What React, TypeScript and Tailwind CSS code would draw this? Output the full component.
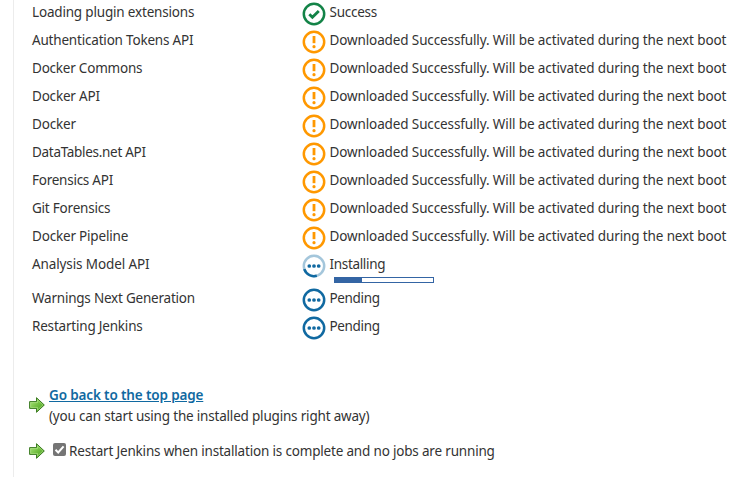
import React from "react";

type Status = "success" | "warning" | "running" | "pending";

type Job = { name: string; status: Status; message: string; track: string; messageTrack: string };

const DOWNLOADED = "Downloaded Successfully. Will be activated during the next boot";
const DT = "tracking-[-0.12px]";

const jobs: Job[] = [
  { name: "Loading plugin extensions", status: "success", message: "Success", track: "tracking-[-0.18px]", messageTrack: "tracking-[-0.25px]" },
  { name: "Authentication Tokens API", status: "warning", message: DOWNLOADED, track: "tracking-[-0.19px]", messageTrack: DT },
  { name: "Docker Commons", status: "warning", message: DOWNLOADED, track: "tracking-[-0.22px]", messageTrack: DT },
  { name: "Docker API", status: "warning", message: DOWNLOADED, track: "tracking-[-0.2px]", messageTrack: DT },
  { name: "Docker", status: "warning", message: DOWNLOADED, track: "tracking-[-0.15px]", messageTrack: DT },
  { name: "DataTables.net API", status: "warning", message: DOWNLOADED, track: "tracking-[-0.3px]", messageTrack: DT },
  { name: "Forensics API", status: "warning", message: DOWNLOADED, track: "tracking-[-0.25px]", messageTrack: DT },
  { name: "Git Forensics", status: "warning", message: DOWNLOADED, track: "tracking-[-0.22px]", messageTrack: DT },
  { name: "Docker Pipeline", status: "warning", message: DOWNLOADED, track: "tracking-[-0.19px]", messageTrack: DT },
  { name: "Analysis Model API", status: "running", message: "Installing", track: "tracking-[-0.11px]", messageTrack: "tracking-[-0.33px]" },
  { name: "Warnings Next Generation", status: "pending", message: "Pending", track: "tracking-[-0.22px]", messageTrack: "tracking-[-0.35px]" },
  { name: "Restarting Jenkins", status: "pending", message: "Pending", track: "tracking-[-0.2px]", messageTrack: "tracking-[-0.35px]" },
];

function StatusIcon({ status }: { status: Status }) {
  const color = status === "success" ? "#138347" : status === "warning" ? "#ff9800" : "#1069a1";
  return (
    <svg viewBox="0 0 24 24" className="h-6 w-6 shrink-0" fill="none">
      <circle cx="12" cy="12" r="10.2" stroke={color} strokeWidth="2.5" opacity={status === "running" ? 0.38 : 1} />
      {status === "success" && <path d="M7.3 12.2l3.1 3 6.4-6.2" stroke={color} strokeWidth="2.9" />}
      {status === "warning" && (
        <>
          <path d="M12 6v7.2" stroke={color} strokeWidth="2.8" />
          <circle cx="12" cy="16.7" r="1.6" fill={color} />
        </>
      )}
      {(status === "running" || status === "pending") && (
        <>
          <circle cx="7.3" cy="12" r="1.85" fill={color} />
          <circle cx="12" cy="12" r="1.85" fill={color} />
          <circle cx="16.7" cy="12" r="1.85" fill={color} />
        </>
      )}
      {status === "running" && <path d="M2.3 15.2A10.2 10.2 0 0 0 14.8 21.8" stroke={color} strokeWidth="2.5" />}
    </svg>
  );
}

function Arrow() {
  return (
    <svg viewBox="0 0 16 16" className="h-4 w-4 shrink-0">
      <defs>
        <linearGradient id="arrow" x1="0" y1="0" x2="1" y2="1">
          <stop offset="0" stopColor="#b5e88a" />
          <stop offset="0.5" stopColor="#74c142" />
          <stop offset="1" stopColor="#3f961c" />
        </linearGradient>
      </defs>
      <path d="M.6 4.6h6.9V.7L15.3 8l-7.8 7.3v-3.9H.6z" fill="url(#arrow)" stroke="#3b7a22" strokeLinejoin="round" />
      <path d="M1.6 10.4V5.6h6.9V2.9L13.9 8l-5.4 5.1v-2.7z" fill="none" stroke="#b4e58c" strokeWidth="0.8" opacity="0.75" />
    </svg>
  );
}

export default function App() {
  return (
    <main className="h-[477px] w-[742px] overflow-hidden bg-white pl-[13px] font-['Noto_Sans',sans-serif] text-[13.5px] leading-5 text-[#333]">
      <div className="h-full border-l border-[#ececec]">
        <div className="flex flex-col pl-[18px]">
          {jobs.map((job) => (
            <div key={job.name} className={job.status === "running" ? "flex h-[34px]" : "flex h-7"}>
              <div className="w-[270px] pt-[2px]">
                <span className={`whitespace-nowrap ${job.track}`}>{job.name}</span>
              </div>
              <div className="flex">
                <div className="pt-[2px]"><StatusIcon status={job.status} /></div>
                <div className="ml-[3.5px] pt-[2px]">
                  <div className="h-5"><span className={`whitespace-nowrap ${job.messageTrack}`}>{job.message}</span></div>
                  {job.status === "running" && (
                    <div className="ml-[4.5px] mt-[3px] h-[6px] w-[100px] border border-[#3465a4]">
                      <div className="h-full w-[28%] bg-[#3465a4]" />
                    </div>
                  )}
                </div>
              </div>
            </div>
          ))}
        </div>
        <div className="mt-[43px] flex items-start pl-[15px]">
          <div className="pt-3"><Arrow /></div>
          <div className="ml-1 leading-[21px]">
            <div><a href="#" className="whitespace-nowrap font-semibold tracking-[-0.14px] text-[#1069a1] underline">Go back to the top page</a></div>
            <div><span className="whitespace-nowrap tracking-[-0.19px]">(you can start using the installed plugins right away)</span></div>
          </div>
        </div>
        <div className="mt-[14px] flex items-center pl-[15px]">
          <Arrow />
          <span className="mb-[3px] ml-2 flex h-[13px] w-[13px] items-center justify-center rounded-[2px] bg-[#757575]">
            <svg viewBox="0 0 13 13" className="h-[13px] w-[13px]" fill="none">
              <path d="M2.5 6.8l2.7 2.7 5.4-6.2" stroke="white" strokeWidth="2" />
            </svg>
          </span>
          <span className="ml-[3px] whitespace-nowrap tracking-[-0.18px]">Restart Jenkins when installation is complete and no jobs are running</span>
        </div>
      </div>
    </main>
  );
}
